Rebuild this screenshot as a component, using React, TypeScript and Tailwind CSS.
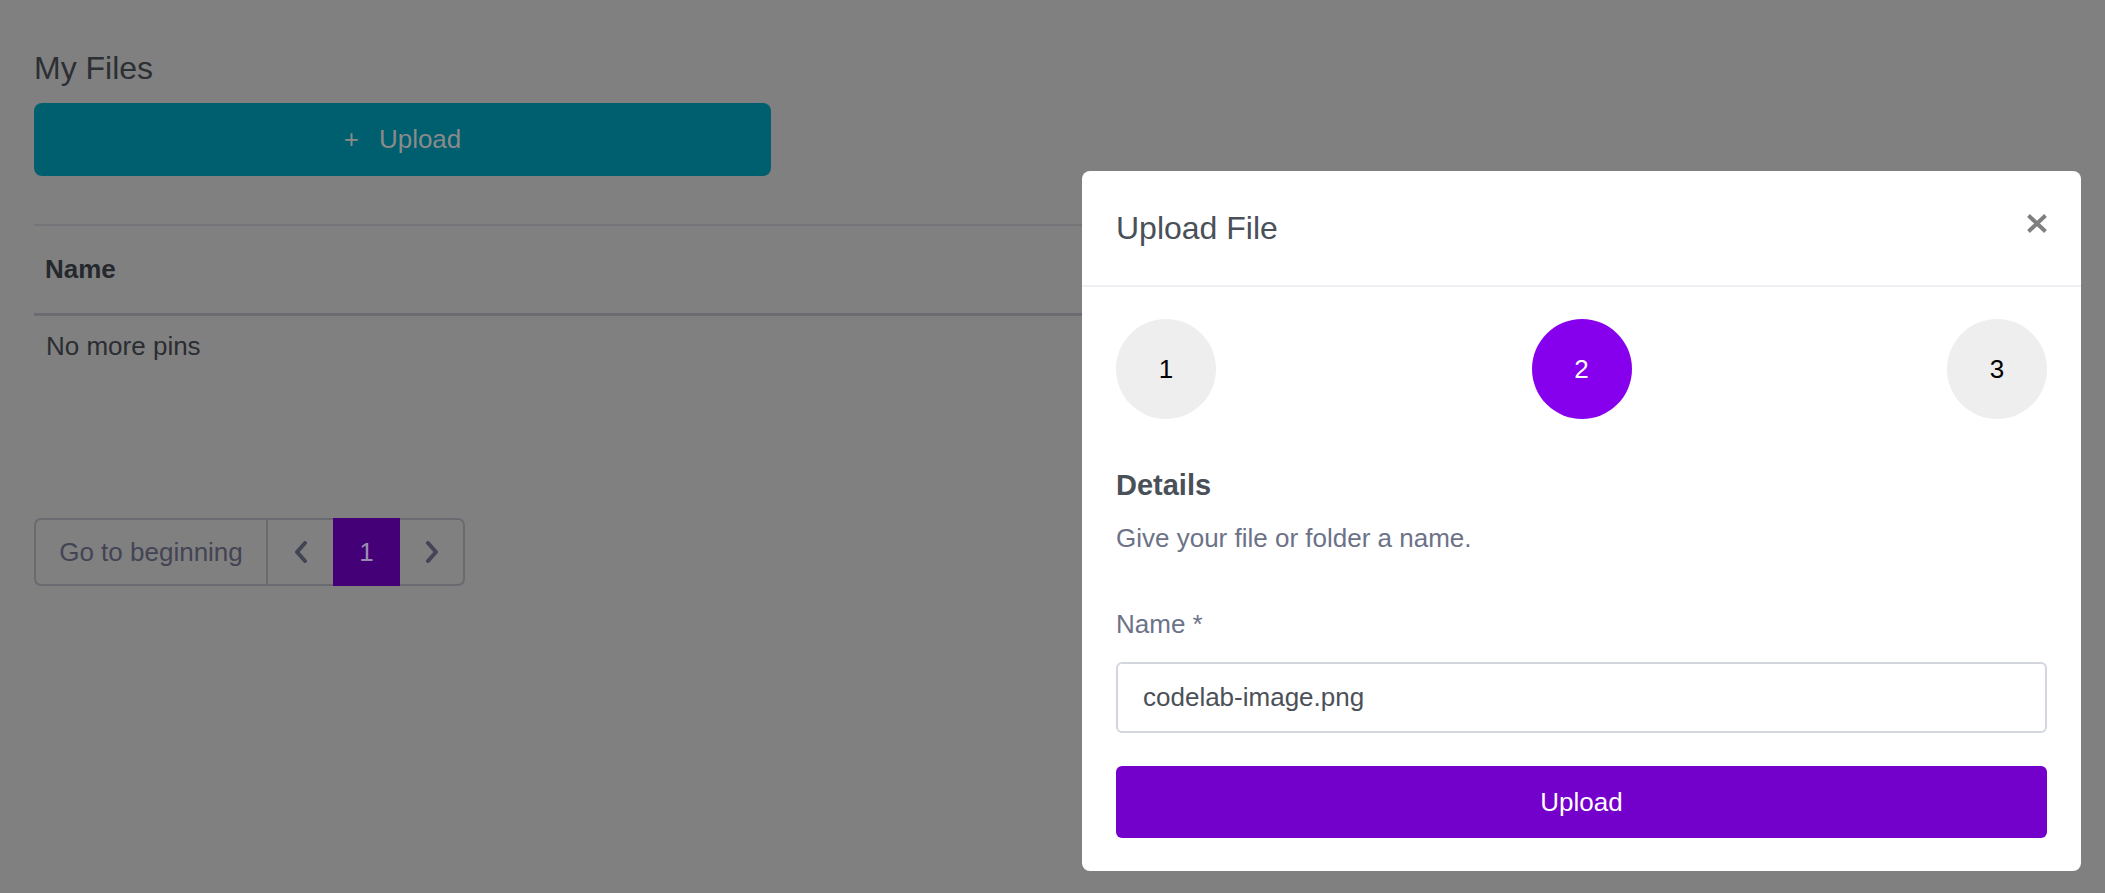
import React from 'react';

function Chevron({ dir }: { dir: 'left' | 'right' }) {
  return (
    <svg width="14" height="22" viewBox="0 0 14 22" fill="none">
      <polyline
        points={dir === 'left' ? '11,2 3,11 11,20' : '3,2 11,11 3,20'}
        stroke="currentColor"
        strokeWidth="4"
        strokeLinecap="round"
        strokeLinejoin="round"
      />
    </svg>
  );
}

function StepCircle({ n, active }: { n: number; active?: boolean }) {
  return (
    <div
      className={
        active
          ? 'w-[100px] h-[100px] rounded-full bg-[#8700ee] text-white flex items-center justify-center text-[26px]'
          : 'w-[100px] h-[100px] rounded-full bg-[#eeeeee] text-black flex items-center justify-center text-[26px]'
      }>
      {n}
    </div>
  );
}

export default function App() {
  return (
    // page is shown dimmed behind the dialog, colours below are the dimmed ones
    <div className="relative w-full h-[893px] overflow-hidden bg-[#808080] font-['Liberation_Sans',Arial,sans-serif]">
      <div className="px-[34px] pt-[50px]">
        <h1 className="text-[32px] leading-[37px] text-[#2c2f33]">My Files</h1>
        <button className="mt-[16px] w-[737px] h-[73px] rounded-[8px] bg-[#005f6e] text-[#8a8a8a] text-[26px] flex items-center justify-center gap-[20px]">
          <span className="font-light">+</span>
          <span>Upload</span>
        </button>

        <div className="mt-[48px] border-t-2 border-[#747579]">
          <div className="px-[11px] py-[29px] border-b-[3px] border-[#6b6c72] text-[26px] leading-[29px] font-bold text-[#25282c]">
            Name
          </div>
          <div className="px-[12px] pt-[15px] pb-[13px] text-[26px] leading-[30px] text-[#2a2d31]">
            No more pins
          </div>
        </div>

        {/* Pagination */}
        <div className="mt-[144px] flex h-[68px] text-[26px] text-[#434455]">
          <div className="w-[234px] flex items-center justify-center border-2 border-[#696b70] rounded-l-[7px]">
            Go to beginning
          </div>
          <div className="w-[65px] flex items-center justify-center border-y-2 border-[#696b70]">
            <Chevron dir="left" />
          </div>
          <div className="w-[67px] flex items-center justify-center bg-[#430077] text-[#9a8cb0]">
            1
          </div>
          <div className="w-[65px] flex items-center justify-center border-y-2 border-r-2 border-[#696b70] rounded-r-[7px]">
            <Chevron dir="right" />
          </div>
        </div>
      </div>

      {/* Dialog */}
      <div className="absolute left-[1082px] top-[171px] w-[999px] rounded-[8px] bg-white">
        <div className="h-[116px] flex items-center justify-between px-[34px] border-b-2 border-[#eef0f3]">
          <h2 className="text-[32px] leading-[37px] text-[#495057]">Upload File</h2>
          <button className="mb-[9px] text-[#7f7f7f]">
            <svg width="20" height="19" viewBox="0 0 20 19">
              <path d="M1.5 1.5 L18.5 17.5 M18.5 1.5 L1.5 17.5" stroke="currentColor" strokeWidth="4" />
            </svg>
          </button>
        </div>

        <div className="px-[34px] pt-[32px] pb-[33px]">
          <div className="flex justify-between">
            <StepCircle n={1} />
            <StepCircle n={2} active />
            <StepCircle n={3} />
          </div>

          <h3 className="mt-[50px] text-[29px] leading-[33px] font-bold text-[#495057]">Details</h3>
          <p className="mt-[21px] text-[26px] leading-[30px] text-[#6c7288]">
            Give your file or folder a name.
          </p>

          <label className="block mt-[56px] text-[26px] leading-[30px] text-[#6c7288]">Name *</label>
          <input
            readOnly
            value="codelab-image.png"
            className="mt-[23px] block w-full h-[71px] border-2 border-[#d3d7dd] rounded-[6px] px-[25px] text-[26px] text-[#4b5058] outline-none"
          />

          <button className="mt-[33px] w-full h-[72px] rounded-[6px] bg-[#7400cc] text-white text-[26px]">
            Upload
          </button>
        </div>
      </div>
    </div>
  );
}
